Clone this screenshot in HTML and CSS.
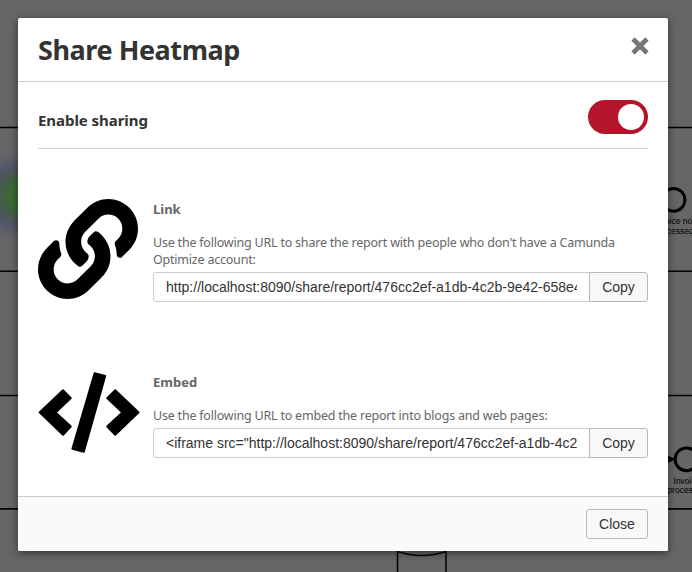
FILE: index.html
```html
<!DOCTYPE html>
<html lang="en">
<head>
<meta charset="utf-8">
<title>Share Heatmap</title>
<link rel="stylesheet" href="styles.css">
</head>
<body>
<svg class="diagram" width="692" height="572" viewBox="0 0 692 572" aria-hidden="true">
  <defs>
    <radialGradient id="heat">
      <stop offset="0" stop-color="#35692a"/>
      <stop offset=".25" stop-color="#3b6a33"/>
      <stop offset=".45" stop-color="#485a4c"/>
      <stop offset=".65" stop-color="#55556a"/>
      <stop offset="1" stop-color="#666" stop-opacity="0"/>
    </radialGradient>
  </defs>
  <circle cx="22" cy="196" r="50" fill="url(#heat)"/>
  <g stroke="#000" stroke-width="1.4" fill="none">
    <path d="M0 127.5H692M0 271.3H692M0 395.5H692"/>
    <path d="M0 508.8H692" stroke-width="1.7"/>
    <path d="M397.5 572V548M446 572V548M397.5 551.5Q421 559.5 446 551.5" stroke-width="1.5"/>
    <circle cx="673.5" cy="199.8" r="11.4" stroke-width="3"/>
    <circle cx="686.5" cy="459.3" r="11.4" stroke-width="3"/>
  </g>
  <path d="M667 455L675.5 459.3L667 463.6Z"/>
  <g class="diagram-label">
    <text x="674" y="224" text-anchor="middle">Invoice not</text>
    <text x="674" y="234" text-anchor="middle">processed</text>
    <text x="687" y="484" text-anchor="middle">Invoice</text>
    <text x="687" y="493" text-anchor="middle">processed</text>
  </g>
</svg>
<main class="modal" role="dialog" aria-labelledby="title">
  <header class="modal-header">
    <h1 id="title">Share Heatmap</h1>
    <button class="dismiss" aria-label="Close dialog">
      <svg width="18" height="18" viewBox="0 0 18 18"><path d="M2 2L16 16M16 2L2 16"/></svg>
    </button>
  </header>
  <div class="modal-body">
    <div class="enable">
      <span class="enable-label">Enable sharing</span>
      <span class="switch" role="switch" aria-checked="true"></span>
    </div>
    <section class="share">
      <svg class="share-icon" width="100" height="100" viewBox="0 0 512 512"><path d="M326.612 185.391c59.747 59.809 58.927 155.698.36 214.59-.11.12-.24.25-.36.37l-67.2 67.2c-59.27 59.27-155.699 59.262-214.96 0-59.27-59.26-59.27-155.7 0-214.96l37.106-37.106c9.84-9.84 26.786-3.3 27.294 10.606.648 17.722 3.826 35.527 9.69 52.721 1.986 5.822.567 12.262-3.783 16.612l-13.087 13.087c-28.026 28.026-28.905 73.66-1.155 101.96 28.024 28.579 74.086 28.749 102.325.51l67.2-67.19c28.191-28.191 28.073-73.757 0-101.83-3.701-3.694-7.429-6.564-10.341-8.569a16.037 16.037 0 0 1-6.947-12.606c-.396-10.567 3.348-21.456 11.698-29.806l21.054-21.055c5.521-5.521 14.182-6.199 20.584-1.731a152.482 152.482 0 0 1 20.522 17.197zM467.547 44.449c-59.261-59.262-155.69-59.27-214.96 0l-67.2 67.2c-.12.12-.25.25-.36.37-58.566 58.892-59.387 154.781.36 214.59a152.454 152.454 0 0 0 20.521 17.196c6.402 4.468 15.064 3.789 20.584-1.731l21.054-21.055c8.35-8.35 12.094-19.239 11.698-29.806a16.037 16.037 0 0 0-6.947-12.606c-2.912-2.005-6.64-4.875-10.341-8.569-28.073-28.073-28.191-73.639 0-101.83l67.2-67.19c28.239-28.239 74.3-28.069 102.325.51 27.75 28.3 26.872 73.934-1.155 101.96l-13.087 13.087c-4.35 4.35-5.769 10.79-3.783 16.612 5.864 17.194 9.042 34.999 9.69 52.721.509 13.906 17.454 20.446 27.294 10.606l37.106-37.106c59.271-59.259 59.271-155.699.001-214.959z"/></svg>
      <div class="share-content">
        <h2>Link</h2>
        <p class="desc-link">Use the following URL to share the report with people who don't have a Camunda<br>Optimize account:</p>
        <div class="copy-row"><div class="field"><span class="field-text">http://localhost:8090/share/report/476cc2ef-a1db-4c2b-9e42-658e4f0a</span></div><button class="btn btn-copy">Copy</button></div>
      </div>
    </section>
    <section class="share share-embed">
      <svg class="share-icon" width="102" height="100" viewBox="0 0 102 100">
        <g stroke="#000" stroke-width="2" stroke-linejoin="round">
          <path d="M25 18.3L1.6 40.4L25 62.8L32.8 54.6L17.6 40.4L32.8 26.1Z"/>
          <path d="M77.2 18.3L100.6 40.4L77.2 62.8L69.2 54.6L84.4 40.4L69.2 26.1Z"/>
          <path d="M56.6 1.2L67.2 3.9L45.8 79.8L34.4 76.8Z"/>
        </g>
      </svg>
      <div class="share-content">
        <h2>Embed</h2>
        <p class="desc-embed">Use the following URL to embed the report into blogs and web pages:</p>
        <div class="copy-row"><div class="field"><span class="field-text">&lt;iframe src="http://localhost:8090/share/report/476cc2ef-a1db-4c2</span></div><button class="btn btn-copy">Copy</button></div>
      </div>
    </section>
  </div>
  <footer class="modal-footer"><button class="btn btn-close">Close</button></footer>
</main>
</body>
</html>
```

FILE: styles.css
```css
* { box-sizing: border-box; }
body {
  margin: 0;
  height: 572px;
  padding: 18px;
  overflow: hidden;
  background: #666;
  color: #333;
  font-family: "Noto Sans", "Open Sans", sans-serif;
}
.diagram { position: absolute; left: 0; top: 0; }
.diagram-label { font: 8.5px "Liberation Sans", sans-serif; fill: #000; }
.modal {
  position: relative;
  display: flex;
  flex-direction: column;
  width: 650px;
  height: 533px;
  border-radius: 2px;
  background: #fff;
  box-shadow: 0 2px 8px rgba(0, 0, 0, .5);
}
.modal-header {
  display: flex;
  justify-content: space-between;
  align-items: flex-start;
  height: 64px;
  padding: 14px 19px 0 20px;
  border-bottom: 1px solid #ccc;
}
h1 { margin: 0; font-size: 27px; line-height: 36px; font-weight: 700; letter-spacing: -.43px; }
.dismiss { display: flex; margin-top: 5px; padding: 0; border: 0; background: none; }
.dismiss path { stroke: #777; stroke-width: 4.6; fill: none; }
.modal-body { flex: 1; padding: 0 20px; }
.enable {
  display: flex;
  justify-content: space-between;
  align-items: center;
  height: 67px;
  padding-top: 3px;
  border-bottom: 1px solid #d3d3d3;
}
.enable-label { padding-top: 6px; font-size: 15px; font-weight: 700; letter-spacing: -.05px; }
.switch {
  display: flex;
  justify-content: flex-end;
  align-items: center;
  width: 60px;
  height: 34px;
  padding-right: 4px;
  border-radius: 17px;
  background: #b5152b;
}
.switch::after { content: ""; width: 26px; height: 26px; border-radius: 50%; background: #fff; }
.share { display: flex; height: 103px; margin-top: 50px; }
.share-embed { margin-top: 70px; }
.share-icon { flex: none; overflow: visible; }
.share-content { flex: none; width: 495px; margin-left: 15px; }
.share-embed .share-content { margin-left: 13px; }
h2 { margin: 0; font-size: 13px; line-height: 21px; font-weight: 700; color: #666; }
p {
  margin: 14px 0 4px;
  font-size: 12.5px;
  line-height: 17px;
  letter-spacing: -.21px;
  color: #666;
  white-space: nowrap;
}
.copy-row { display: flex; }
.field {
  width: 437px;
  height: 30px;
  padding: 0 12px;
  border: 1px solid #ccc;
  border-radius: 3px 0 0 3px;
  font: 14px/28px "Liberation Sans", Arial, sans-serif;
}
.field-text { display: block; overflow: hidden; white-space: nowrap; }
.btn {
  height: 30px;
  padding: 0;
  border: 1px solid #b9b9b9;
  border-radius: 3px;
  background: #f8f8f8;
  color: #333;
  font: 14px "Liberation Sans", Arial, sans-serif;
}
.btn-copy { width: 59px; margin-left: -1px; border-radius: 0 3px 3px 0; }
.btn-close { width: 62px; }
.modal-footer {
  height: 55px;
  padding: 12px 20px;
  border-top: 1px solid #ccc;
  border-radius: 0 0 2px 2px;
  background: #f8fafc;
  text-align: right;
}
```
